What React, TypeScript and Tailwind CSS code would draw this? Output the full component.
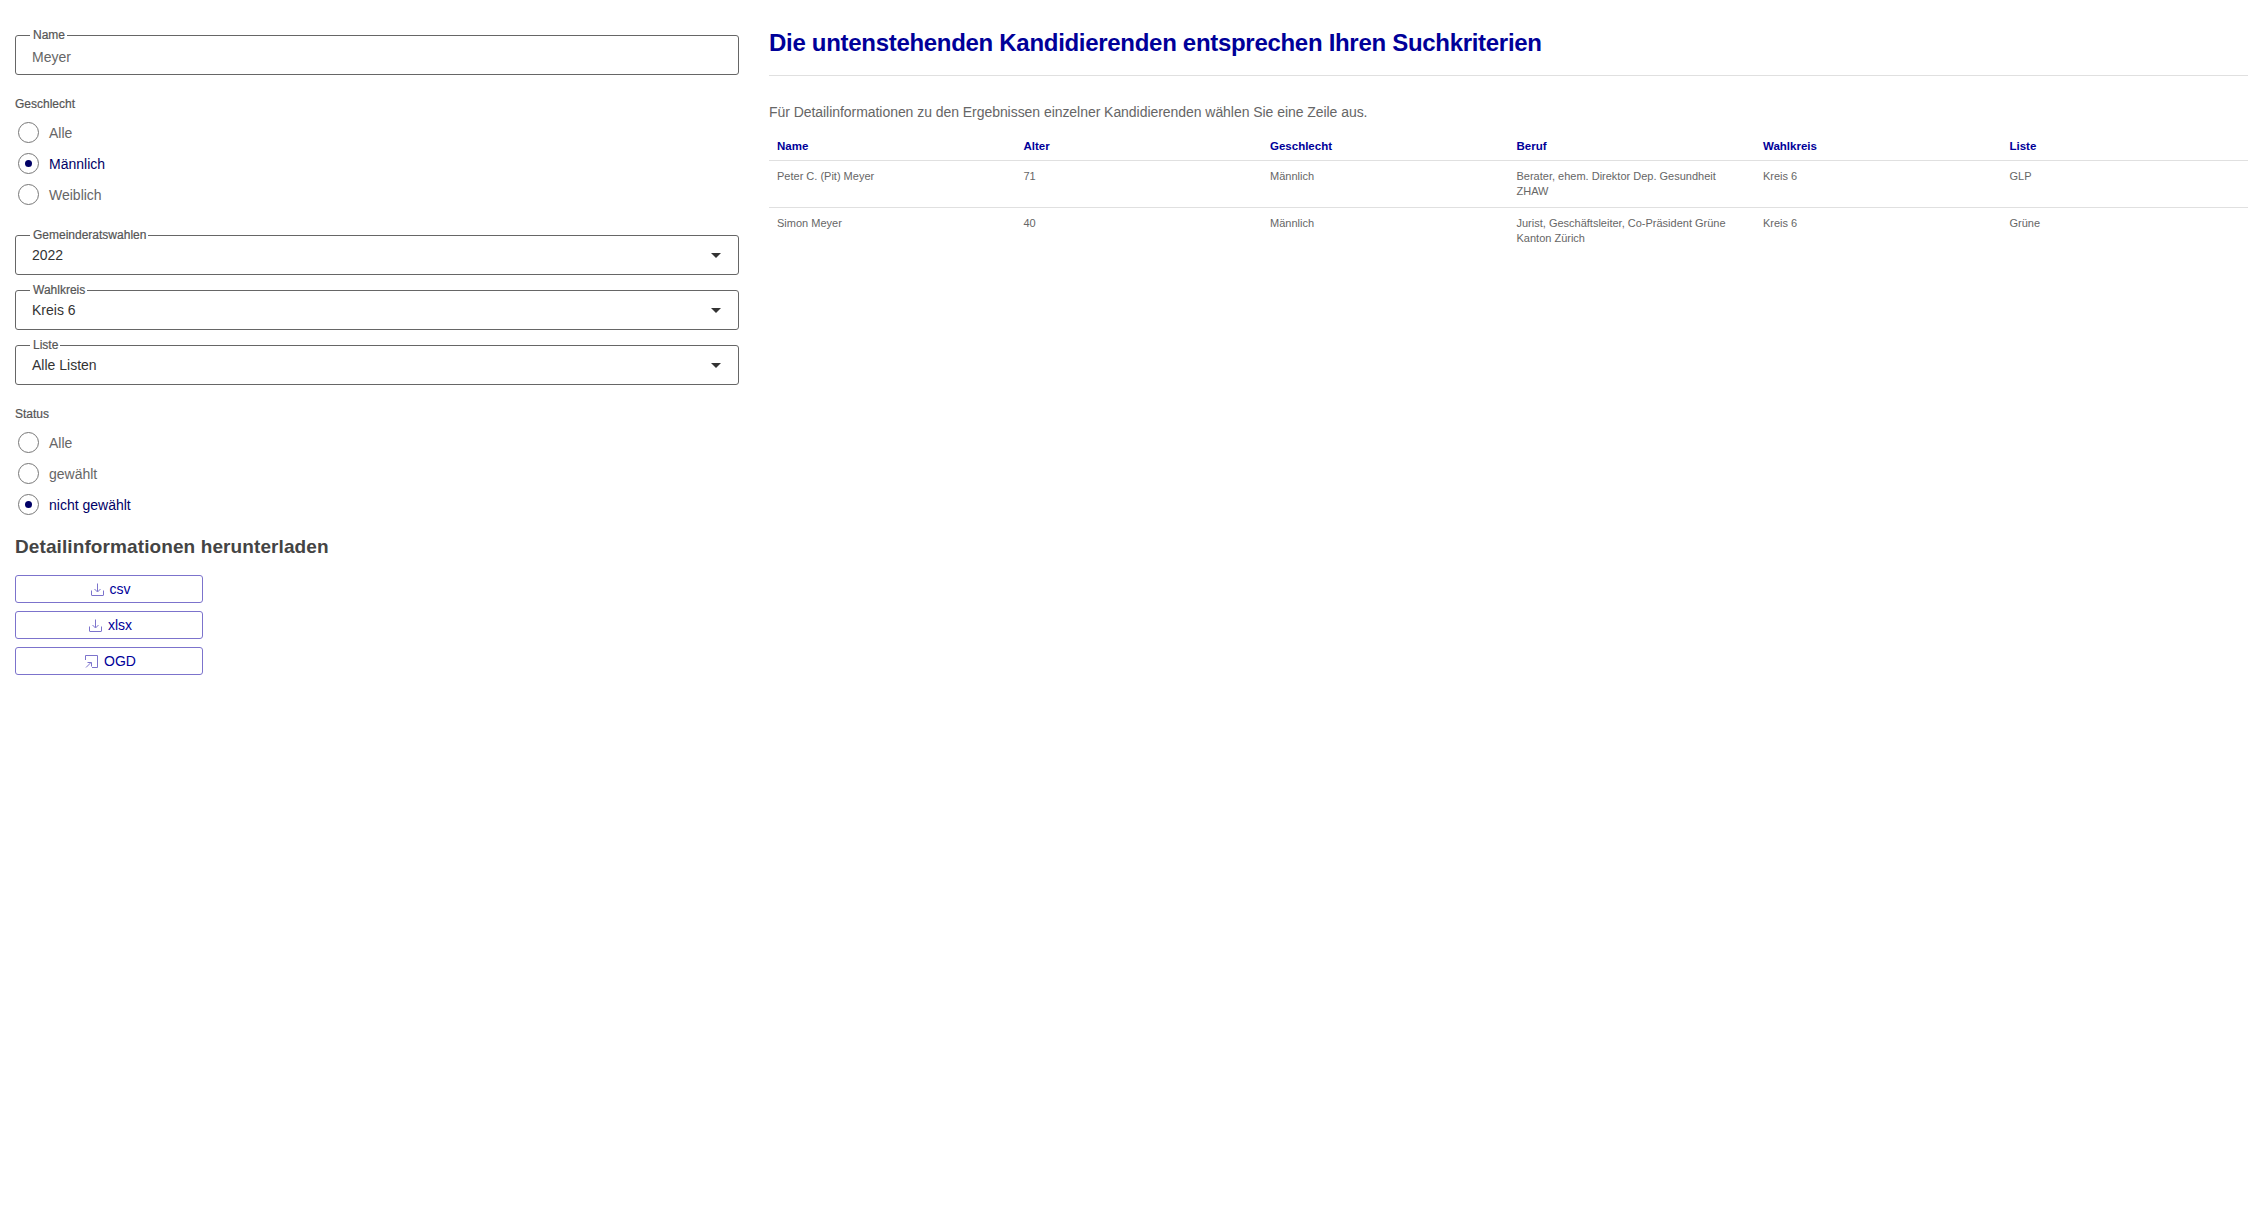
import React from "react";

const font = { fontFamily: '"Liberation Sans", Arial, sans-serif' };

function Field({ label, value, select, muted }: { label: string; value: string; select?: boolean; muted?: boolean }) {
  return (
    <fieldset className="m-0 h-[46px] w-full rounded-[3px] border border-[#666666] pl-[9px] pr-[16px]">
      <legend className="ml-[5px] pl-[3px] pr-[2px] text-[12px] leading-[12px] text-[#555555] [-webkit-text-stroke:0.2px_#555555]">{label}</legend>
      <div className={`flex items-center justify-between ${muted ? "h-[31px]" : "h-[28px]"}`}>
        <span className={`pl-[7px] text-[14px] leading-[20px] ${muted ? "text-[#666666]" : "text-[#333333]"}`}>{value}</span>
        {select && (
          <svg width="10" height="5" viewBox="0 0 10 5" className="mr-[1px]">
            <path d="M0 0h10L5 5z" fill="#333333" />
          </svg>
        )}
      </div>
    </fieldset>
  );
}

function Radio({ label, checked }: { label: string; checked?: boolean }) {
  return (
    <div className="flex h-[31px] items-center pl-[3px]">
      <span className="flex h-[21px] w-[21px] items-center justify-center rounded-full border border-[#777777]">
        {checked && <span className="h-[7px] w-[7px] rounded-full bg-[#000066]" />}
      </span>
      <span className={`ml-[10px] text-[14px] leading-[20px] ${checked ? "text-[#000066]" : "text-[#666666]"}`}>{label}</span>
    </div>
  );
}

function DownloadIcon() {
  return (
    <svg width="13" height="13" viewBox="0 0 13 13" fill="none" stroke="#7c73cc" strokeWidth="1">
      <path d="M0.5 7.5v4.5a0.5 0.5 0 0 0 .5.5h11a0.5 0.5 0 0 0 .5-.5V7.5" />
      <path d="M6.5 0.5v8M3.5 6l3 3 3-3" />
    </svg>
  );
}

function OgdIcon() {
  return (
    <svg width="13" height="13" viewBox="0 0 13 13" fill="none" stroke="#7c73cc" strokeWidth="1">
      <path d="M0.5 5V0.5h12v12H7" />
      <path d="M1 12.5l5-5M2.5 7.5h4v4" />
    </svg>
  );
}

function Btn({ icon, label }: { icon: React.ReactNode; label: string }) {
  return (
    <button className="flex h-[28px] w-[188px] items-center justify-center gap-[6px] rounded-[3px] border border-[#7c73cc] bg-white pl-[3px] text-[14px] leading-[20px] text-[#000099]">
      {icon}
      <span>{label}</span>
    </button>
  );
}

const head = ["Name", "Alter", "Geschlecht", "Beruf", "Wahlkreis", "Liste"];
const rows = [
  ["Peter C. (Pit) Meyer", "71", "Männlich", "Berater, ehem. Direktor Dep. Gesundheit ZHAW", "Kreis 6", "GLP"],
  ["Simon Meyer", "40", "Männlich", "Jurist, Geschäftsleiter, Co-Präsident Grüne Kanton Zürich", "Kreis 6", "Grüne"],
];

export default function App() {
  return (
    <div className="flex min-h-[1206px] gap-[30px] bg-white px-[15px]" style={font}>
      <div className="w-[724px] shrink-0 pt-[29px]">
        <Field label="Name" value="Meyer" muted />
        <div className="mt-[21px] text-[12px] leading-[16px] text-[#555555] [-webkit-text-stroke:0.2px_#555555]">Geschlecht</div>
        <div className="mt-[5px]">
          <Radio label="Alle" />
          <Radio label="Männlich" checked />
          <Radio label="Weiblich" />
        </div>
        <div className="mt-[19px] flex flex-col gap-[9px]">
          <Field label="Gemeinderatswahlen" value="2022" select />
          <Field label="Wahlkreis" value="Kreis 6" select />
          <Field label="Liste" value="Alle Listen" select />
        </div>
        <div className="mt-[21px] text-[12px] leading-[16px] text-[#555555] [-webkit-text-stroke:0.2px_#555555]">Status</div>
        <div className="mt-[5px]">
          <Radio label="Alle" />
          <Radio label="gewählt" />
          <Radio label="nicht gewählt" checked />
        </div>
        <h2 className="mt-[15px] text-[19px] font-bold leading-[24px] tracking-[0.1px] text-[#444444]">Detailinformationen herunterladen</h2>
        <div className="mt-[16px] flex flex-col gap-[8px]">
          <Btn icon={<DownloadIcon />} label="csv" />
          <Btn icon={<DownloadIcon />} label="xlsx" />
          <Btn icon={<OgdIcon />} label="OGD" />
        </div>
      </div>
      <div className="min-w-0 flex-1 pt-[27px]">
        <h1 className="text-[24px] font-bold leading-[32px] tracking-[-0.3px] text-[#000099]">Die untenstehenden Kandidierenden entsprechen Ihren Suchkriterien</h1>
        <div className="mt-[16px] h-px bg-[#e0e0e0]" />
        <p className="mt-[26px] text-[14px] leading-[20px] tracking-[-0.05px] text-[#666666]">Für Detailinformationen zu den Ergebnissen einzelner Kandidierenden wählen Sie eine Zeile aus.</p>
        <table className="mt-[10px] w-full table-fixed border-collapse">
          <thead>
            <tr className="border-b border-[#e0e0e0]">
              {head.map((h) => (
                <th key={h} className="h-[28px] px-[8px] text-left text-[11.5px] font-bold leading-[16px] text-[#000099]">{h}</th>
              ))}
            </tr>
          </thead>
          <tbody>
            {rows.map((r, i) => (
              <tr key={i} className="border-b border-[#e0e0e0] last:border-b-0">
                {r.map((c, j) => (
                  <td key={j} className="px-[8px] pb-[7px] pt-[8px] align-top text-[11px] leading-[15.5px] text-[#666666]">{c}</td>
                ))}
              </tr>
            ))}
          </tbody>
        </table>
      </div>
    </div>
  );
}
